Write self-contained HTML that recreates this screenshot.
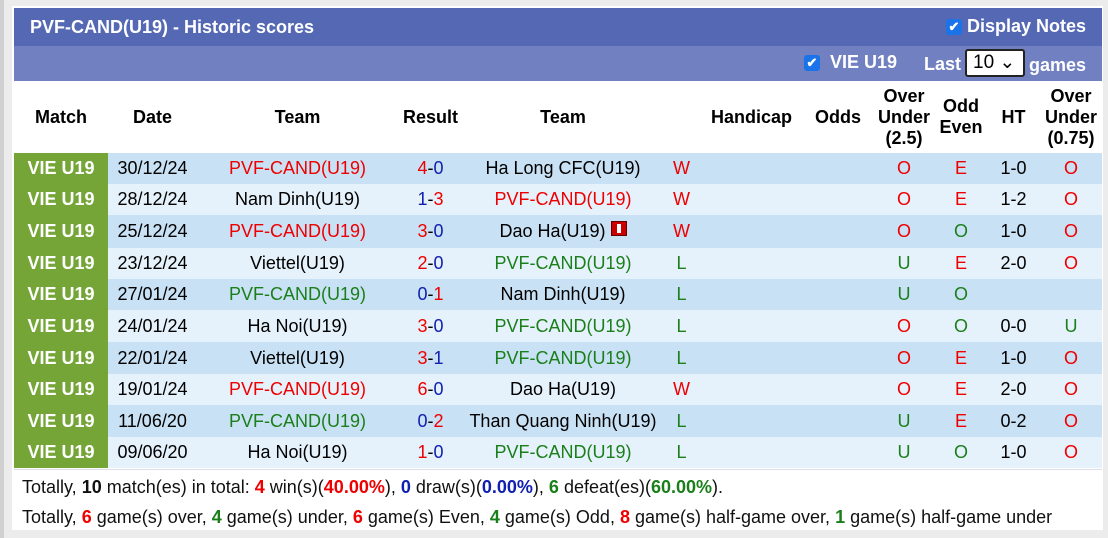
<!DOCTYPE html>
<html><head><meta charset="utf-8"><style>
body{margin:0;width:1108px;height:538px;background:#ececec;font-family:"Liberation Sans",Arial,sans-serif;position:relative;overflow:hidden}
.lb{position:absolute;left:0;top:0;width:4px;height:538px;background:#d0d0d0}
.box{position:absolute;left:12px;top:6px;width:1091px;height:524px;background:#fff}
.t1{position:absolute;left:14px;top:8px;width:1088px;height:38px;background:#5468b4;color:#fff;font-weight:bold;font-size:18px}
.t2{position:absolute;left:14px;top:46px;width:1088px;height:35px;background:#7080c0;color:#fff;font-weight:bold;font-size:18px}
table{position:absolute;left:14px;top:81px;border-collapse:collapse;table-layout:fixed;width:1088px;font-size:18px}
td{text-align:center;padding:0;white-space:nowrap}
th{font-size:18px;font-weight:bold;color:#000;height:72px;line-height:21px;padding:0}
.m{background:#74a536;color:#fff;font-weight:bold}
tr.a td{background:#c9e1f4}tr.b td{background:#e6f2fb}
tr.a td.m,tr.b td.m{background:#74a536}
.r{color:#e00}.g{color:#1a7f1a}.bl{color:#1020b0}
.cb{display:inline-block;width:16px;height:16px;background:#1a73e8;border-radius:3px;color:#fff;font-size:13px;line-height:16px;text-align:center;vertical-align:1px}
.sum{position:absolute;left:22px;font-size:18px;color:#111}
</style></head><body>
<div class="lb"></div>
<div class="box"></div>
<div class="t1"><span style="position:absolute;left:16px;top:9px">PVF-CAND(U19) - Historic scores</span><span style="position:absolute;right:16px;top:8px"><span class="cb">✔</span>&nbsp;Display Notes</span></div>
<div class="t2"><span style="position:absolute;left:790px;top:6px"><span class="cb">✔</span>&nbsp;&nbsp;VIE U19</span><span style="position:absolute;left:910px;top:8px">Last</span><span style="position:absolute;left:951px;top:3px;width:60px;height:28px;background:#fff;border:2px solid #222;border-radius:3px;box-sizing:border-box;color:#000;font-weight:normal;font-size:19px;line-height:23px;padding-left:6px">10 ⌄</span><span style="position:absolute;left:1015px;top:9px">games</span></div>
<table>
<colgroup><col style="width:94px"><col style="width:89px"><col style="width:201px"><col style="width:65px"><col style="width:200px"><col style="width:37px"><col style="width:103px"><col style="width:70px"><col style="width:62px"><col style="width:52px"><col style="width:53px"><col style="width:62px"></colgroup>
<tr><th>Match</th><th>Date</th><th>Team</th><th>Result</th><th>Team</th><th></th><th>Handicap</th><th>Odds</th><th>Over<br>Under<br>(2.5)</th><th>Odd<br>Even</th><th>HT</th><th>Over<br>Under<br>(0.75)</th></tr>
<tr class="a" style="height:31px"><td class="m">VIE U19</td><td>30/12/24</td><td class="r">PVF-CAND(U19)</td><td><span class="r">4</span>-<span class="bl">0</span></td><td>Ha Long CFC(U19)</td><td class="r">W</td><td></td><td></td><td class="r">O</td><td class="r">E</td><td>1-0</td><td class="r">O</td></tr>
<tr class="b" style="height:31px"><td class="m">VIE U19</td><td>28/12/24</td><td>Nam Dinh(U19)</td><td><span class="bl">1</span>-<span class="r">3</span></td><td class="r">PVF-CAND(U19)</td><td class="r">W</td><td></td><td></td><td class="r">O</td><td class="r">E</td><td>1-2</td><td class="r">O</td></tr>
<tr class="a" style="height:33px"><td class="m">VIE U19</td><td>25/12/24</td><td class="r">PVF-CAND(U19)</td><td><span class="r">3</span>-<span class="bl">0</span></td><td>Dao Ha(U19) <span style="display:inline-block;width:16px;height:15px;background:#c00;border:1px solid #600;box-sizing:border-box;vertical-align:1px;position:relative"><span style="position:absolute;left:5px;top:2px;width:4px;height:9px;background:#fff"></span></span></td><td class="r">W</td><td></td><td></td><td class="r">O</td><td class="g">O</td><td>1-0</td><td class="r">O</td></tr>
<tr class="b" style="height:31px"><td class="m">VIE U19</td><td>23/12/24</td><td>Viettel(U19)</td><td><span class="r">2</span>-<span class="bl">0</span></td><td class="g">PVF-CAND(U19)</td><td class="g">L</td><td></td><td></td><td class="g">U</td><td class="r">E</td><td>2-0</td><td class="r">O</td></tr>
<tr class="a" style="height:31px"><td class="m">VIE U19</td><td>27/01/24</td><td class="g">PVF-CAND(U19)</td><td><span class="bl">0</span>-<span class="r">1</span></td><td>Nam Dinh(U19)</td><td class="g">L</td><td></td><td></td><td class="g">U</td><td class="g">O</td><td></td><td></td></tr>
<tr class="b" style="height:32px"><td class="m">VIE U19</td><td>24/01/24</td><td>Ha Noi(U19)</td><td><span class="r">3</span>-<span class="bl">0</span></td><td class="g">PVF-CAND(U19)</td><td class="g">L</td><td></td><td></td><td class="r">O</td><td class="g">O</td><td>0-0</td><td class="g">U</td></tr>
<tr class="a" style="height:32px"><td class="m">VIE U19</td><td>22/01/24</td><td>Viettel(U19)</td><td><span class="r">3</span>-<span class="bl">1</span></td><td class="g">PVF-CAND(U19)</td><td class="g">L</td><td></td><td></td><td class="r">O</td><td class="r">E</td><td>1-0</td><td class="r">O</td></tr>
<tr class="b" style="height:31px"><td class="m">VIE U19</td><td>19/01/24</td><td class="r">PVF-CAND(U19)</td><td><span class="r">6</span>-<span class="bl">0</span></td><td>Dao Ha(U19)</td><td class="r">W</td><td></td><td></td><td class="r">O</td><td class="r">E</td><td>2-0</td><td class="r">O</td></tr>
<tr class="a" style="height:32px"><td class="m">VIE U19</td><td>11/06/20</td><td class="g">PVF-CAND(U19)</td><td><span class="bl">0</span>-<span class="r">2</span></td><td>Than Quang Ninh(U19)</td><td class="g">L</td><td></td><td></td><td class="g">U</td><td class="r">E</td><td>0-2</td><td class="r">O</td></tr>
<tr class="b" style="height:31px"><td class="m">VIE U19</td><td>09/06/20</td><td>Ha Noi(U19)</td><td><span class="r">1</span>-<span class="bl">0</span></td><td class="g">PVF-CAND(U19)</td><td class="g">L</td><td></td><td></td><td class="g">U</td><td class="g">O</td><td>1-0</td><td class="r">O</td></tr>
</table>
<div style="position:absolute;left:14px;top:469px;width:1088px;height:1px;background:#dde"></div>
<div class="sum" style="top:477px">Totally, <b>10</b> match(es) in total: <b class="r">4</b> win(s)(<b class="r">40.00%</b>), <b class="bl">0</b> draw(s)(<b class="bl">0.00%</b>), <b class="g">6</b> defeat(es)(<b class="g">60.00%</b>).</div>
<div class="sum" style="top:507px">Totally, <b class="r">6</b> game(s) over, <b class="g">4</b> game(s) under, <b class="r">6</b> game(s) Even, <b class="g">4</b> game(s) Odd, <b class="r">8</b> game(s) half-game over, <b class="g">1</b> game(s) half-game under</div>
</body></html>
